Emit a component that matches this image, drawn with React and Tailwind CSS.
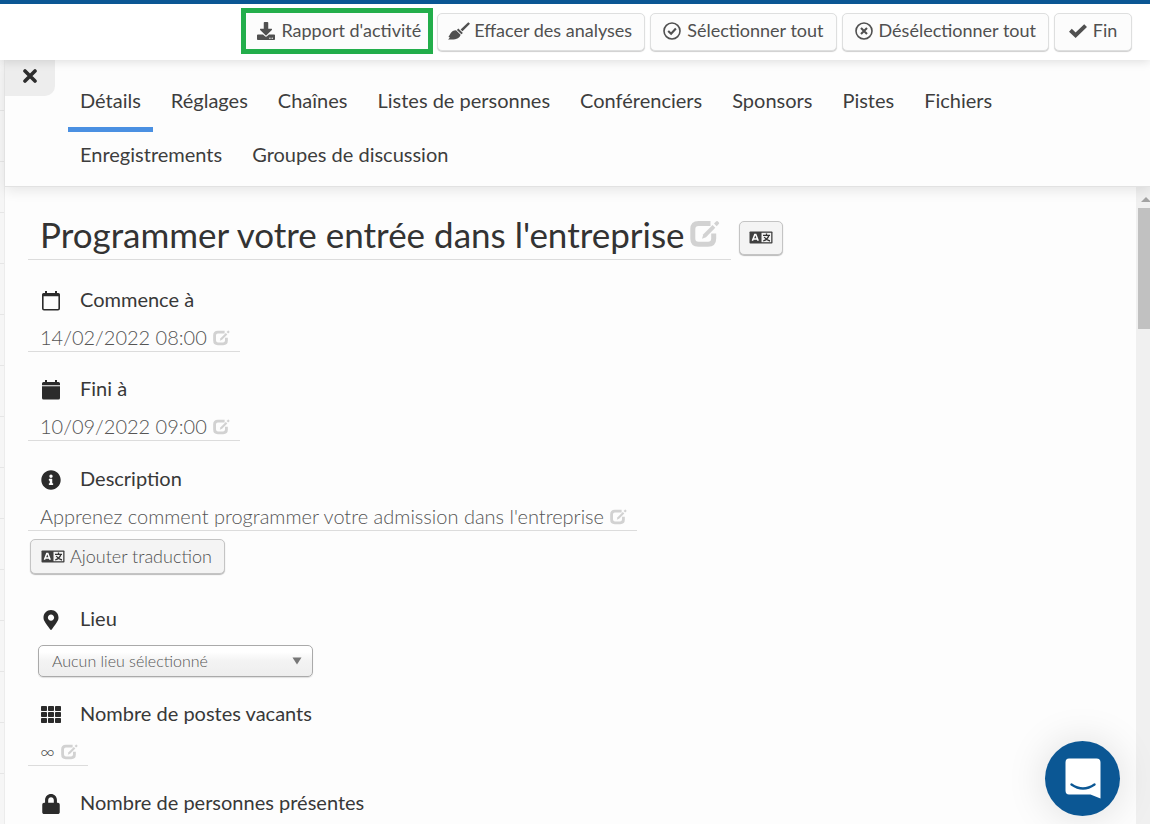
import React from "react";
import { FaDownload, FaInfoCircle, FaLock, FaMapMarkerAlt } from "react-icons/fa";

function BrushIcon() {
  return (
    <svg viewBox="0 0 22 18" className="-mx-[2px] h-[18px] w-[22px] shrink-0" fill="currentColor" aria-hidden="true">
      <path d="M20.300 .2 22 1.700 14.500 9.300 12.600 7.500Z" />
      <path d="M10.300 6.600 14.900 10.900 13.400 12.300 8.900 8Z" />
      <path d="M8 8.200 12.600 12.800C11.700 16.400 8.600 18 0 17.400 .8 16.900 1.600 16.100 1.700 15 1.200 15.200 .8 15.200 .4 15 2 13.500 2.700 8.200 8 8.200Z" />
    </svg>
  );
}

function CircleIcon({ mark }) {
  return (
    <svg viewBox="0 0 18 18" className="size-[18px] shrink-0" fill="none" stroke="currentColor" aria-hidden="true">
      <circle cx="9" cy="9" r="8" strokeWidth="1.600" />
      <path d={mark} strokeWidth="2.100" />
    </svg>
  );
}

function CheckIcon() {
  return (
    <svg viewBox="0 0 18 14" className="h-[14px] w-[18px] shrink-0" fill="none" stroke="currentColor" strokeWidth="4" aria-hidden="true">
      <path d="M1.400 6.300 6.600 11.200 16.600 1.600" />
    </svg>
  );
}

function EditIcon({ className }) {
  return (
    <svg viewBox="0 0 30 28" className={"shrink-0 text-[#d2d2d2] " + className} aria-hidden="true">
      <path d="M20.500 3.600H8.500Q2.800 3.600 2.800 9.300V18.600Q2.800 24.300 8.500 24.300H18Q23.700 24.300 23.700 18.600V13.500" fill="none" stroke="currentColor" strokeWidth="5" />
      <path d="M12 18.800 13.300 14.300 22.600 5 25.300 7.700 16 17.200Z" fill="currentColor" />
      <path d="M24 3.500 26.300 1.200Q27 .6 27.700 1.200L28.900 2.400Q29.500 3.100 28.900 3.800L26.700 6.200Z" fill="currentColor" />
    </svg>
  );
}

function TranslateIcon() {
  return (
    <svg viewBox="0 0 24 13" className="h-[13px] w-6 shrink-0" aria-hidden="true">
      <rect x="0.500" y="0.500" width="23" height="12" rx="0.800" fill="#404040" />
      <rect x="12.500" y="1.800" width="9.700" height="9.400" fill="#f4f4f4" />
      <path d="M3.400 9.700 5.800 3.400H6.800L9.200 9.700M4.300 7.900H8.300" fill="none" stroke="#fff" strokeWidth="1.500" />
      <path d="M14 4.300H21M17.500 2.500V4.300M19.800 4.500C19 7.300 17 9 14.200 10M15.200 6C16.500 8 18.500 9.400 21 10" fill="none" stroke="#333" strokeWidth="1.300" />
    </svg>
  );
}

function CalendarIcon({ filled }) {
  return (
    <svg viewBox="0 0 18 20" className="h-5 w-[18px]" aria-hidden="true">
      <path d="M3 0H5V2H13V0H15V2H16.500Q18 2 18 3.500V5.300H0V3.500Q0 2 1.500 2H3Z" fill="currentColor" />
      {filled ? (
        <path d="M0 6.300H18V18Q18 19.500 16.500 19.500H1.500Q0 19.500 0 18Z" fill="currentColor" />
      ) : (
        <path d="M.8 4V17.500Q.8 18.700 2 18.700H16Q17.200 18.700 17.200 17.500V4" fill="none" stroke="currentColor" strokeWidth="1.600" />
      )}
    </svg>
  );
}

function GridIcon() {
  return (
    <svg viewBox="0 0 20 18" className="h-[18px] w-5" fill="currentColor" aria-hidden="true">
      {[0, 7, 14].map((x) =>
        [0, 6, 12].map((y) => <rect key={x + "-" + y} x={x} y={y} width="6" height="5" rx="0.800" />)
      )}
    </svg>
  );
}

function ToolbarButton({ icon, children }) {
  return (
    <button
      type="button"
      className="flex h-[38px] min-w-[78px] items-center justify-center gap-[6px] rounded-[5px] border border-[#dedfdf] bg-[#fcfcfc] px-3 pb-[2px] text-lg text-[#505050] shadow-[0_1px_1px_#cfcfcf]"
    >
      {icon}
      <span className="pb-[2px]">{children}</span>
    </button>
  );
}

const tabs = [
  "Détails",
  "Réglages",
  "Chaînes",
  "Listes de personnes",
  "Conférenciers",
  "Sponsors",
  "Pistes",
  "Fichiers",
  "Enregistrements",
  "Groupes de discussion",
];

function Label({ icon, children, htmlFor }) {
  const Tag = htmlFor ? "label" : "h2";
  return (
    <Tag htmlFor={htmlFor} className="flex h-8 items-center gap-[18px] pl-3 text-xl text-[#383838]">
      <span className="flex w-[22px] justify-center pt-[2px] text-[#2b2b2b]">{icon}</span>
      <span className="pb-[2px]">{children}</span>
    </Tag>
  );
}

function Value({ children }) {
  return (
    <button
      type="button"
      className="mt-2 flex h-7 items-center gap-[6px] border-b border-[#dcdcdc] pr-[10px] pl-3 text-xl font-light text-[#555]"
    >
      <span className="pb-[2px]">{children}</span>
      <EditIcon className="h-4 w-[17px]" />
    </button>
  );
}

export default function App() {
  return (
    <div className="flex h-screen flex-col overflow-hidden bg-[#fdfdfd] font-['Lato',sans-serif]">
      <header className="relative z-10 flex h-[60px] shrink-0 items-center justify-end gap-[5px] border-t-4 border-[#0b5794] bg-white pr-[18px] shadow-[0_1px_10px_rgba(0,0,0,0.14)]">
        <div className="-mr-px mb-[2px] border-[5px] border-[#23ae4b]">
          <button type="button" className="flex h-9 items-center gap-[6px] bg-[#fcfcfc] pr-[7px] pl-[11px] text-lg text-[#505050]">
            <FaDownload className="size-[18px]" aria-hidden="true" />
            <span className="pb-[2px]">Rapport d'activité</span>
          </button>
        </div>
        <ToolbarButton icon={<BrushIcon />}>Effacer des analyses</ToolbarButton>
        <ToolbarButton icon={<CircleIcon mark="M5.200 9 8.100 11.800 12.900 6.500" />}>Sélectionner tout</ToolbarButton>
        <ToolbarButton icon={<CircleIcon mark="M6 6 12 12M12 6 6 12" />}>Désélectionner tout</ToolbarButton>
        <ToolbarButton icon={<CheckIcon />}>Fin</ToolbarButton>
      </header>

      <div className="flex min-h-0 flex-1">
        <div className="w-[5px] shrink-0 border-r border-[#ececec] bg-[repeating-linear-gradient(to_bottom,#f6f6f6_0,#f6f6f6_50px,#e6e6e6_50px,#e6e6e6_51px)]" />
        <div className="flex min-w-0 flex-1 flex-col">
          <div className="relative z-[5] flex shrink-0 items-start border-b border-[#e2e2e2] bg-[#fdfdfd] shadow-[0_4px_12px_rgba(0,0,0,0.09)]">
            <button
              type="button"
              aria-label="Fermer"
              className="flex h-9 w-[50px] shrink-0 items-center justify-center rounded-br-[10px] bg-[#ededed] pb-1 text-[#2d2d2d]"
            >
              <svg viewBox="0 0 14 14" className="size-[14px]" fill="none" stroke="currentColor" strokeWidth="3.600" strokeLinecap="round" aria-hidden="true">
                <path d="M2 2 12 12M12 2 2 12" />
              </svg>
            </button>
            <nav className="flex flex-wrap gap-x-[6px] pt-[18px] pr-20 pl-[13px]">
              {tabs.map((tab, i) => (
                <a
                  key={tab}
                  href="#"
                  className={
                    "flex h-[54px] items-center border-b-[5px] px-3 pb-[5px] text-xl text-[#3d3d3d] " +
                    (i === 0 ? "border-[#4a90e2]" : "border-transparent")
                  }
                >
                  {tab}
                </a>
              ))}
            </nav>
          </div>

          <div className="flex min-h-0 flex-1">
            <main className="min-w-0 flex-1 overflow-hidden pt-[26px] pl-[23px]">
              <div className="flex items-center gap-2">
                <h1 className="flex h-[47px] items-center gap-[5px] border-b border-[#dcdcdc] pr-[11px] pb-1 pl-3 text-[35px] text-[#333]">
                  <span>Programmer votre entrée dans l'entreprise</span>
                  <EditIcon className="h-7 w-[30px]" />
                </h1>
                <button
                  type="button"
                  aria-label="Traduire le titre"
                  className="mt-[2px] flex h-[34px] w-11 items-center justify-center rounded-[5px] border border-[#c4c4c4] bg-[#f4f4f4] shadow-[0_1px_1px_#bbb]"
                >
                  <TranslateIcon />
                </button>
              </div>

              <div className="mt-6 flex flex-col items-start">
                <Label icon={<CalendarIcon />}>Commence à</Label>
                <Value>14/02/2022 08:00</Value>
              </div>

              <div className="mt-[21px] flex flex-col items-start">
                <Label icon={<CalendarIcon filled />}>Fini à</Label>
                <Value>10/09/2022 09:00</Value>
              </div>

              <div className="mt-[22px] flex flex-col items-start">
                <Label icon={<FaInfoCircle className="size-5" />}>Description</Label>
                <Value>Apprenez comment programmer votre admission dans l'entreprise</Value>
                <button
                  type="button"
                  className="mt-2 ml-[2px] flex h-[35px] items-center gap-[5px] rounded-[5px] border border-[#c4c4c4] bg-[#f4f4f4] pr-3 pl-[10px] text-lg font-light text-[#505050] shadow-[0_1px_1px_#bbb]"
                >
                  <TranslateIcon />
                  <span className="pb-[2px]">Ajouter traduction</span>
                </button>
              </div>

              <div className="mt-[29px] flex flex-col items-start">
                <Label htmlFor="lieu" icon={<FaMapMarkerAlt className="h-5 w-4" />}>Lieu</Label>
                <div className="relative mt-[10px] ml-[10px]">
                  <select
                    id="lieu"
                    className="h-8 w-[275px] appearance-none rounded-[5px] border border-[#aaa] bg-linear-to-b from-white from-20% via-[#f3f3f3] via-50% to-[#eee] pr-8 pl-[13px] text-base font-light text-[#555] shadow-[0_1px_1px_rgba(0,0,0,0.12)]"
                  >
                    <option>Aucun lieu sélectionné</option>
                  </select>
                  <svg viewBox="0 0 10 8" className="pointer-events-none absolute top-3 right-[11px] h-2 w-[10px]" aria-hidden="true">
                    <path d="M.5 .5H9.500L5 7.500Z" fill="#777" />
                  </svg>
                </div>
              </div>

              <div className="mt-[21px] flex flex-col items-start">
                <Label icon={<GridIcon />}>Nombre de postes vacants</Label>
                <Value>∞</Value>
              </div>

              <div className="mt-[21px] flex flex-col items-start">
                <Label icon={<FaLock className="size-5" />}>Nombre de personnes présentes</Label>
              </div>
            </main>

            <div className="flex w-[14px] shrink-0 flex-col bg-[#f0f0f0] pt-[10px] pl-[2px]" aria-hidden="true">
              <svg viewBox="0 0 12 5" className="h-[5px] w-3">
                <path d="M3 5 8 0 12 4V5Z" fill="#a3a3a3" />
              </svg>
              <div className="mt-[6px] h-[121px] bg-[#c1c1c1]" />
            </div>
          </div>
        </div>
      </div>

      <button
        type="button"
        aria-label="Ouvrir la messagerie"
        className="fixed right-[30px] bottom-2 z-20 flex size-[75px] items-center justify-center rounded-full bg-[#0b5794] shadow-[0_1px_40px_rgba(0,0,0,0.13)]"
      >
        <svg viewBox="0 0 36 41" className="h-[41px] w-9" aria-hidden="true">
          <path d="M4 0.500H31.500Q35.500 .5 35.500 4.500V40.500L25.500 36.500H4Q.5 36.500 .5 32.500V4.500Q.5 .5 4 .5Z" fill="#fff" />
          <path d="M6.500 26.500Q18 34.500 29.500 26.500" fill="none" stroke="#0b5794" strokeWidth="2.400" strokeLinecap="round" />
        </svg>
      </button>
    </div>
  );
}
